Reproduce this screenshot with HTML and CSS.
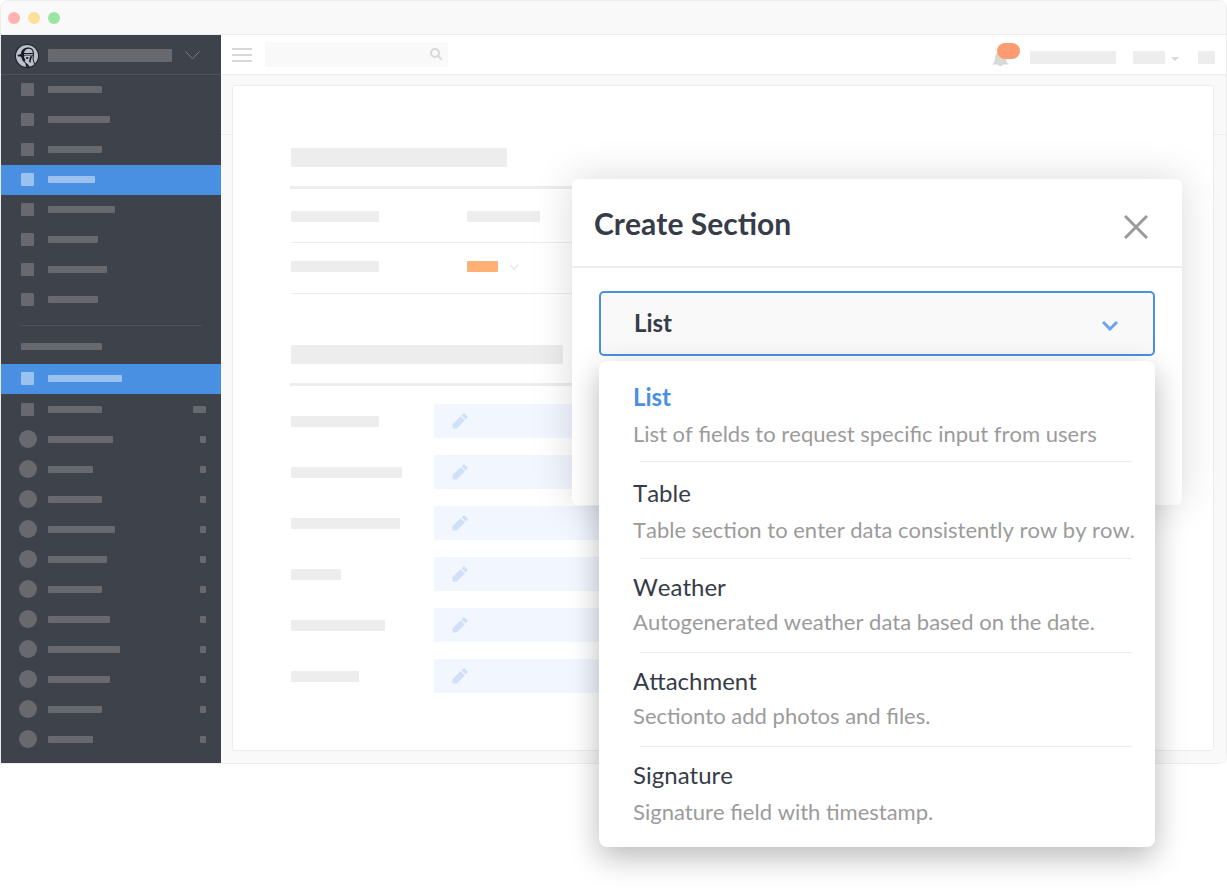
FILE: index.html
```html
<!DOCTYPE html>
<html lang="en">
<head>
    <meta charset="UTF-8">
    <meta name="viewport" content="width=device-width, initial-scale=1.0">
    <title>Create Section</title>
    <link rel="stylesheet" href="styles.css">
</head>
<body>

<!-- pencil used by every field -->
<svg class="sprite" aria-hidden="true">
    <symbol id="pencil" viewBox="0 0 16 16">
        <path d="M0.500 15.500V11.300L8.600 3.200L12.800 7.400L4.700 15.500ZM9.500 2.300L11.200 0.700Q12 0 12.800 0.700L15.300 3.200Q16 4 15.300 4.800L13.700 6.500Z"/>
    </symbol>
</svg>

<div class="window">
    <div class="titlebar">
        <span class="dot red"></span>
        <span class="dot yellow"></span>
        <span class="dot green"></span>
    </div>

    <div class="app">
        <aside class="sidebar">
            <button class="account" type="button" aria-label="Account">
                <svg class="avatar" viewBox="0 0 24 24">
                    <circle cx="12" cy="12" r="12" fill="#1c212b"/>
                    <circle cx="12" cy="12" r="11" fill="#bcc0ca"/>
                    <path fill="#161b26" d="M2.500 11L6 10C6 6 9 3.500 13.500 3.500C17.500 3.500 19.200 6.500 19 10.500L18 12L17 11.500H9.500L9 13.500L10.500 16L9.500 17.500L13 20.500L15 23L11 22.800L10.500 19.500L7.500 16.500L6 12.500L3 12.500Z"/>
                    <path fill="#bcc0ca" d="M9 9C9.500 6 11.500 4.800 13.500 4.800C16.500 4.800 17.800 6.500 17.800 9Z"/>
                    <path fill="#161b26" d="M10.500 13.500L13.500 13L13 15L11.500 15ZM15 12.500L17.500 12L16 15.500L15.500 19L14 17.500Z"/>
                    <path fill="none" stroke="#161b26" d="M18.500 10.500L18 15L19.500 20"/>
                    <path fill="none" stroke="#bcc0ca" stroke-width="0.800" d="M9 10.500H18"/>
                </svg>
                <span class="bar account-name"></span>
                <svg class="account-arrow" viewBox="0 0 15 9"><path d="M0.500 0.500L7.500 7.800L14.500 0.500"/></svg>
            </button>

            <nav class="primary">
                <a href="#" class="item"><i class="square"></i><span class="bar w54"></span></a>
                <a href="#" class="item"><i class="square"></i><span class="bar w62"></span></a>
                <a href="#" class="item"><i class="square"></i><span class="bar w54"></span></a>
                <a href="#" class="item active"><i class="square"></i><span class="bar w47"></span></a>
                <a href="#" class="item"><i class="square"></i><span class="bar w67"></span></a>
                <a href="#" class="item"><i class="square"></i><span class="bar w50"></span></a>
                <a href="#" class="item"><i class="square"></i><span class="bar w59"></span></a>
                <a href="#" class="item"><i class="square"></i><span class="bar w50"></span></a>
            </nav>

            <div class="group-title"><span class="bar w81"></span></div>

            <nav>
                <a href="#" class="item active"><i class="square"></i><span class="bar w74"></span></a>
                <a href="#" class="item"><i class="square"></i><span class="bar w54"></span><span class="bar count wide"></span></a>
                <a href="#" class="item"><i class="circle"></i><span class="bar w65"></span><span class="bar count"></span></a>
                <a href="#" class="item"><i class="circle"></i><span class="bar w45"></span><span class="bar count"></span></a>
                <a href="#" class="item"><i class="circle"></i><span class="bar w54"></span><span class="bar count"></span></a>
                <a href="#" class="item"><i class="circle"></i><span class="bar w67"></span><span class="bar count"></span></a>
                <a href="#" class="item"><i class="circle"></i><span class="bar w59"></span><span class="bar count"></span></a>
                <a href="#" class="item"><i class="circle"></i><span class="bar w54"></span><span class="bar count"></span></a>
                <a href="#" class="item"><i class="circle"></i><span class="bar w62"></span><span class="bar count"></span></a>
                <a href="#" class="item"><i class="circle"></i><span class="bar w72"></span><span class="bar count"></span></a>
                <a href="#" class="item"><i class="circle"></i><span class="bar w62"></span><span class="bar count"></span></a>
                <a href="#" class="item"><i class="circle"></i><span class="bar w54"></span><span class="bar count"></span></a>
                <a href="#" class="item"><i class="circle"></i><span class="bar w45"></span><span class="bar count"></span></a>
            </nav>
        </aside>

        <div class="main">
            <header class="topbar">
                <button class="burger" type="button" aria-label="Menu"><i></i><i></i><i></i></button>
                <div class="search">
                    <input type="search" aria-label="Search">
                    <svg viewBox="0 0 12 12"><circle cx="5" cy="5" r="4"/><path d="M8 8L11 11"/></svg>
                </div>
                <button class="bell" type="button" aria-label="Notifications">
                    <svg viewBox="0 0 18 16"><path d="M0 13.500Q3 11 3 7Q3 1 9 1Q14 1 14 7Q14 11 17 13.500H11Q8.500 17 6 13.500Z"/></svg>
                    <span class="badge"></span>
                </button>
                <span class="block w86"></span>
                <span class="block w32"></span>
                <svg class="caret" viewBox="0 0 8 4"><path d="M0 0H8L4 4Z"/></svg>
                <span class="block w17"></span>
            </header>

            <main class="content">
                <div class="card">
                    <div class="card-title"><span class="block w216"></span></div>
                    <div class="info">
                        <span class="block w88"></span>
                        <span class="block w73"></span>
                    </div>
                    <div class="info">
                        <span class="block w88"></span>
                        <span class="block status"></span>
                        <svg class="status-arrow" viewBox="0 0 10 6"><path d="M1 1L5 5L9 1"/></svg>
                    </div>

                    <div class="card-title second"><span class="block w272"></span></div>
                    <div class="fields">
                        <div class="field"><span class="block w88"></span><div class="value"><svg><use href="#pencil"/></svg></div></div>
                        <div class="field"><span class="block w111"></span><div class="value"><svg><use href="#pencil"/></svg></div></div>
                        <div class="field"><span class="block w109"></span><div class="value"><svg><use href="#pencil"/></svg></div></div>
                        <div class="field"><span class="block w50"></span><div class="value"><svg><use href="#pencil"/></svg></div></div>
                        <div class="field"><span class="block w94"></span><div class="value"><svg><use href="#pencil"/></svg></div></div>
                        <div class="field"><span class="block w68"></span><div class="value"><svg><use href="#pencil"/></svg></div></div>
                    </div>
                </div>
            </main>
        </div>
    </div>
</div>

<div class="modal" role="dialog" aria-labelledby="modalTitle">
    <div class="modal-header">
        <h1 id="modalTitle">Create Section</h1>
        <button class="close" type="button" aria-label="Close">
            <svg viewBox="0 0 24 24"><path d="M1 1L23 23M23 1L1 23"/></svg>
        </button>
    </div>
    <div class="modal-body">
        <div class="dropdown">
            <select id="sectionType" aria-label="Section type">
                <option>List</option>
                <option>Table</option>
                <option>Weather</option>
                <option>Attachment</option>
                <option>Signature</option>
            </select>
            <svg class="arrow" viewBox="0 0 16 10"><path d="M1 1L8 8L15 1"/></svg>

            <ul class="menu">
                <li class="selected"><button type="button"><strong>List</strong><span>List of fields to request specific input from users</span></button></li>
                <li><button type="button"><strong>Table</strong><span>Table section to enter data consistently row by row.</span></button></li>
                <li class="compact"><button type="button"><strong>Weather</strong><span>Autogenerated weather data based on the date.</span></button></li>
                <li class="compact"><button type="button"><strong>Attachment</strong><span>Sectionto add photos and files.</span></button></li>
                <li class="last"><button type="button"><strong>Signature</strong><span>Signature field with timestamp.</span></button></li>
            </ul>
        </div>
    </div>
</div>

<script>
    // Pick a section type from the open menu
    const select = document.getElementById('sectionType');
    const items = document.querySelectorAll('.menu li');

    items.forEach((item, index) => {
        item.addEventListener('click', () => {
            items.forEach(i => i.classList.remove('selected'));
            item.classList.add('selected');
            select.selectedIndex = index;
        });
    });
</script>

</body>
</html>
```
FILE: styles.css
```css
* {
    box-sizing: border-box;
}

body {
    margin: 0;
    min-height: 100vh;
    background-color: #fff;
    font-family: Lato, "Open Sans", sans-serif;
    font-kerning: none;
    color: #363c48;
    position: relative;
}

button {
    border: none;
    background: none;
    padding: 0;
    font-family: inherit;
    font-kerning: inherit;
    color: inherit;
    text-align: left;
    cursor: pointer;
}

svg {
    display: block;
    flex: none;
}

.sprite {
    position: absolute;
    width: 0;
    height: 0;
}

/* Window */
.window {
    border: 1px solid #ededed;
    border-radius: 8px 8px 8px 0;
    overflow: hidden;
}

.titlebar {
    display: flex;
    align-items: center;
    gap: 8px;
    height: 34px;
    padding: 0 7px;
    background-color: #f9f9f9;
    border-bottom: 1px solid #ededed;
}

.dot {
    width: 12px;
    height: 12px;
    border-radius: 50%;
}

.red {
    background-color: #ffb3b0;
}

.yellow {
    background-color: #fce09b;
}

.green {
    background-color: #9ae5a6;
}

.app {
    display: flex;
}

/* Sidebar */
.sidebar {
    flex: none;
    width: 220px;
    padding-bottom: 9px;
    background-color: #3d424b;
}

.account {
    display: flex;
    align-items: center;
    width: 100%;
    height: 40px;
    padding: 2px 21px 0 14px;
    border-bottom: 1px solid #4d525a;
}

.avatar {
    width: 24px;
    height: 24px;
    margin-right: 9px;
}

.account-arrow {
    width: 15px;
    height: 9px;
    margin-left: auto;
    fill: none;
    stroke: #7b7d83;
}

.bar {
    height: 7px;
    border-radius: 1px;
    background-color: #68696e;
}

.account-name {
    width: 124px;
    height: 13px;
}

.item {
    display: flex;
    align-items: center;
    height: 30px;
    padding: 0 15px 0 18px;
}

.square {
    width: 13px;
    height: 13px;
    margin: 0 14px 0 2px;
    border-radius: 1px;
    background-color: #68696e;
}

.circle {
    width: 18px;
    height: 18px;
    margin-right: 11px;
    border-radius: 50%;
    background-color: #68696e;
}

.count {
    width: 6px;
    margin-left: auto;
}

.wide {
    width: 13px;
}

.primary .item,
.active {
    padding-bottom: 1px;
}

.active {
    background-color: #4a90e2;
}

.active .square,
.active .bar {
    background-color: #9bc1ef;
}

.group-title {
    display: flex;
    margin: 10px 19px 0;
    padding: 17px 1px 14px;
    border-top: 1px solid #4d525a;
}

/* Top bar */
.main {
    flex: 1;
    min-width: 0;
    display: flex;
    flex-direction: column;
}

.topbar {
    display: flex;
    align-items: center;
    height: 40px;
    padding: 0 11px;
    border-bottom: 1px solid #ededed;
}

.burger {
    display: grid;
    gap: 4px;
    width: 20px;
    margin-right: 13px;
}

.burger i {
    height: 2px;
    background-color: #d8d8d8;
}

.search {
    display: flex;
    align-items: center;
    width: 183px;
    height: 25px;
    padding: 0 6px 1px 0;
    margin-right: auto;
    background-color: #f9f9f9;
}

.search input {
    flex: 1;
    min-width: 0;
    border: none;
    outline: none;
    background: none;
}

.search svg {
    width: 12px;
    height: 12px;
    fill: none;
    stroke: #d8d8d8;
    stroke-width: 2;
    stroke-linecap: round;
}

.bell {
    position: relative;
    width: 28px;
    height: 24px;
    margin-right: 10px;
    padding-top: 8px;
}

.bell svg {
    width: 18px;
    height: 16px;
    fill: #d8d8d8;
}

.badge {
    position: absolute;
    top: 0;
    right: 0;
    width: 23px;
    height: 16px;
    border-radius: 8px;
    background-color: #ff9b71;
}

.block {
    height: 11px;
    border-radius: 1px;
    background-color: #ededed;
}

.topbar .block {
    height: 13px;
    margin-top: 5px;
}

.caret {
    width: 8px;
    height: 4px;
    margin: 8px 19px 0 6px;
    fill: #d8d8d8;
}

/* Content */
.content {
    flex: 1;
    display: flex;
    padding: 10px 12px 12px 11px;
    background: linear-gradient(#ededed, #ededed) 0 59px / 100% 1px no-repeat #f9f9f9;
}

.card {
    flex: 1;
    padding: 62px 63px 0 57px;
    background-color: #fff;
    border: 1px solid #ededed;
    border-radius: 3px;
}

.card-title {
    padding: 0 1px 19px;
    border-bottom: 3px solid #ededed;
}

.card-title .block {
    display: block;
    height: 19px;
}

.second {
    margin-top: 51px;
}

.info {
    display: grid;
    grid-template-columns: 176px auto 1fr;
    align-items: center;
    height: 51px;
    padding-bottom: 3px;
    margin-left: 1px;
    border-bottom: 1px solid #ededed;
}

.card-title + .info {
    height: 54px;
    padding: 2px 0 0;
}

.status {
    width: 31px;
    background-color: #ffb074;
}

.status-arrow {
    width: 10px;
    height: 6px;
    margin-left: 11px;
    fill: none;
    stroke: #ededed;
    stroke-width: 2;
}

.fields {
    display: grid;
    gap: 17px;
    margin-top: 18px;
}

.field {
    display: grid;
    grid-template-columns: 143px 1fr;
    align-items: center;
    margin-left: 1px;
}

.value {
    display: flex;
    align-items: center;
    height: 34px;
    padding: 0 0 1px 18px;
    border-radius: 1px;
    background-color: #f1f6ff;
}

.value svg {
    width: 16px;
    height: 16px;
    fill: #cfe0f8;
}

/* Placeholder widths */
.w17 { width: 17px; }
.w32 { width: 32px; }
.w45 { width: 45px; }
.w47 { width: 47px; }
.w50 { width: 50px; }
.w54 { width: 54px; }
.w59 { width: 59px; }
.w62 { width: 62px; }
.w65 { width: 65px; }
.w67 { width: 67px; }
.w68 { width: 68px; }
.w72 { width: 72px; }
.w73 { width: 73px; }
.w74 { width: 74px; }
.w81 { width: 81px; }
.w86 { width: 86px; margin-right: 17px; }
.w88 { width: 88px; }
.w94 { width: 94px; }
.w109 { width: 109px; }
.w111 { width: 111px; }
.w216 { width: 216px; }
.w272 { width: 272px; }

/* Modal */
.modal {
    position: absolute;
    top: 179px;
    right: 45px;
    width: 610px;
    min-height: 326px;
    background-color: #fff;
    border-radius: 6px;
    box-shadow: 0 0 40px rgba(0, 0, 0, 0.15);
}

.modal-header {
    display: flex;
    align-items: center;
    justify-content: space-between;
    height: 89px;
    padding: 0 34px 0 22px;
    border-bottom: 2px solid #ededed;
}

h1 {
    margin: 0;
    font-size: 30px;
    line-height: 36px;
    font-weight: bold;
}

.close svg {
    width: 24px;
    height: 24px;
    margin-top: 8px;
    fill: none;
    stroke: #9b9b9b;
    stroke-width: 3;
}

.modal-body {
    padding: 23px 27px;
}

.dropdown {
    position: relative;
}

select {
    display: block;
    width: 100%;
    height: 65px;
    padding: 0 33px 2px;
    appearance: none;
    border: 2px solid #4a90e2;
    border-radius: 5px;
    outline: none;
    background-color: #f9f9f9;
    font-family: inherit;
    font-size: 24px;
    font-weight: bold;
    color: #363c48;
}

.arrow {
    position: absolute;
    top: 30px;
    right: 37px;
    width: 16px;
    height: 10px;
    fill: none;
    stroke: #6aa5eb;
    stroke-width: 3;
    pointer-events: none;
}

.menu {
    position: absolute;
    top: 70px;
    left: 0;
    right: 0;
    margin: 0;
    padding: 5px 0 15px;
    list-style: none;
    background-color: #fff;
    border-radius: 8px;
    box-shadow: 0 10px 30px rgba(0, 0, 0, 0.28);
}

.menu button {
    display: block;
    width: 100%;
    padding: 13px 16px 9px 34px;
}

.menu li:not(:last-child)::after {
    content: "";
    display: block;
    height: 1px;
    margin: 0 23px 0 41px;
    background-color: #ededed;
}

.menu strong {
    display: block;
    font-size: 24px;
    line-height: 36px;
    font-weight: normal;
}

.menu span {
    display: block;
    font-size: 22px;
    line-height: 38px;
    color: #9b9b9b;
    white-space: nowrap;
}

.menu .selected strong {
    font-weight: bold;
    color: #4a90e2;
}

.menu .selected button {
    padding-bottom: 8px;
}

.menu .compact button {
    padding: 10px 16px 13px 34px;
}

.menu .compact span {
    line-height: 34px;
}

.menu .last button {
    padding: 10px 16px 1px 34px;
}
```
